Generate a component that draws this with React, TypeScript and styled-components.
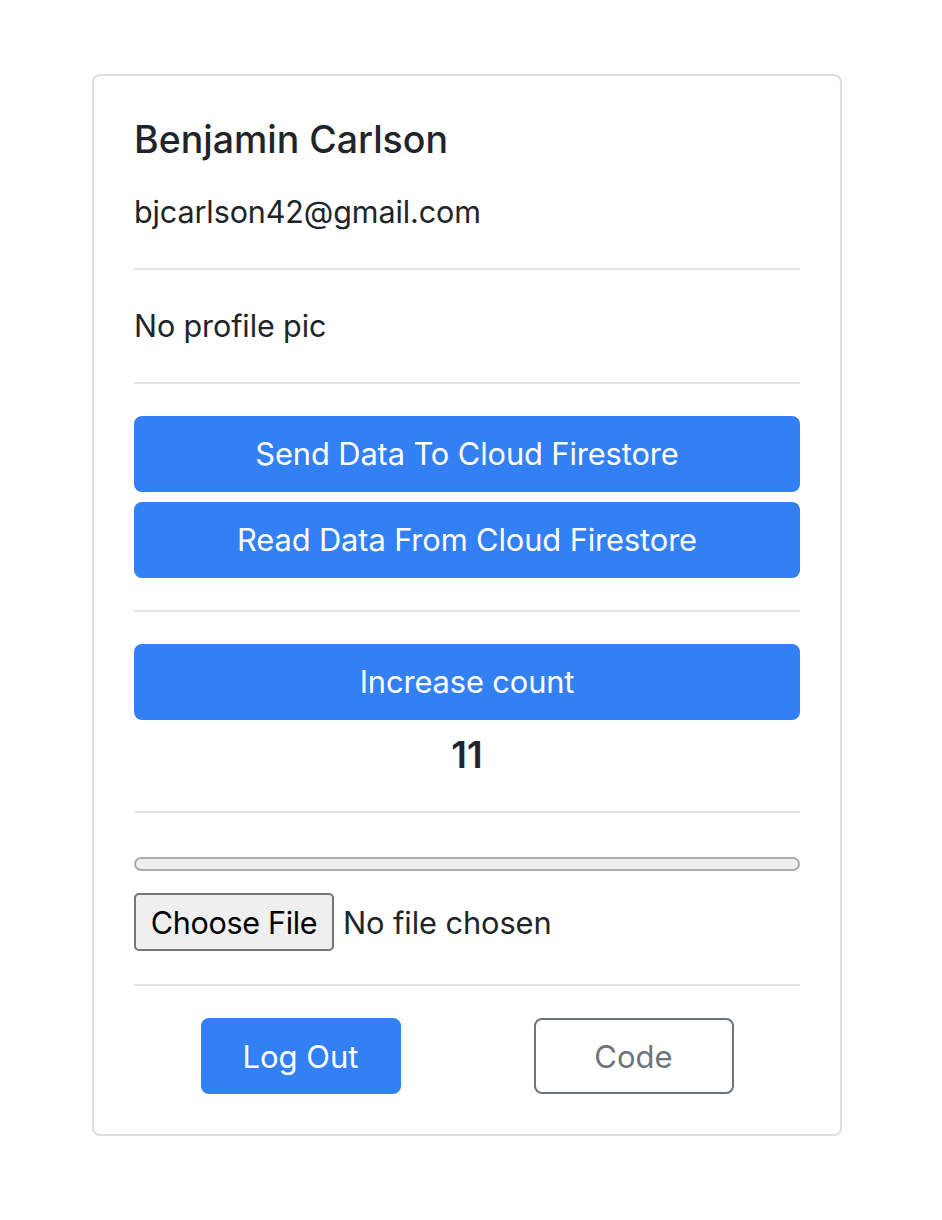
import React from "react";
import styled, { createGlobalStyle } from "styled-components";

const Global = createGlobalStyle`
  html, body { margin: 0; padding: 0; background: #ffffff; }
  body {
    font-family: Inter, "Noto Sans", "Liberation Sans", sans-serif;
    color: #212529;
    -webkit-font-smoothing: antialiased;
  }
  * { box-sizing: border-box; }
`;

const Page = styled.div`
  padding: 74px 0 80px 92px;
`;

const Card = styled.div`
  width: 750px;
  border: 2px solid rgba(0, 0, 0, 0.125);
  border-radius: 8px;
  padding: 40px;
  background: #fff;
`;

const Title = styled.h5`
  margin: 0 0 24px;
  font-size: 37.5px;
  font-weight: 500;
  line-height: 48px;
`;

const Text = styled.p`
  margin: 0 0 32px;
  font-size: 30.5px;
  line-height: 48px;
  letter-spacing: -0.1px;
`;

const Divider = styled.hr`
  border: 0;
  border-top: 2px solid rgba(0, 0, 0, 0.1);
  margin: 32px 0;
  height: 0;
`;

const Button = styled.button<{ $gap?: number }>`
  display: block;
  width: 100%;
  height: 76px;
  margin: 0 0 ${(p) => p.$gap ?? 0}px;
  border: none;
  border-radius: 8px;
  background: #3380f5;
  color: #fff;
  font-family: inherit;
  font-size: 30.8px;
  letter-spacing: -0.1px;
  line-height: 48px;
  padding: 0;
`;

const Count = styled.h5`
  margin: 11px 0 24px;
  text-align: center;
  font-size: 37px;
  font-weight: 600;
  line-height: 48px;
`;

const Upload = styled.div`
  padding-top: 12px;
  margin-bottom: 33px;
`;

const Progress = styled.div`
  height: 14px;
  border: 2px solid #ababab;
  border-radius: 7px;
  background: #efefef;
`;

const FileRow = styled.div`
  display: flex;
  align-items: center;
  gap: 9px;
  margin-top: 22px;
`;

const FileButton = styled.button`
  height: 58px;
  width: 200px;
  padding: 0;
  border: 2px solid #767676;
  border-radius: 5px;
  background: #efefef;
  color: #000;
  font-family: inherit;
  font-size: 30.5px;
  letter-spacing: -0.3px;
`;

const FileLabel = styled.span`
  font-size: 30.8px;
  letter-spacing: -0.1px;
  color: #212529;
`;

const Footer = styled.div`
  display: grid;
  grid-template-columns: 1fr 1fr;
  margin-top: 32px;
`;

const Cell = styled.div`
  display: flex;
  justify-content: center;
`;

const FooterButton = styled.button<{ $outline?: boolean }>`
  width: 200px;
  height: 76px;
  padding: 0;
  border-radius: 8px;
  font-family: inherit;
  font-size: 31px;
  border: 2px solid ${(p) => (p.$outline ? "#6c757d" : "#3380f5")};
  background: ${(p) => (p.$outline ? "#fff" : "#3380f5")};
  color: ${(p) => (p.$outline ? "#6c757d" : "#fff")};
`;

export default function App() {
  return (
    <>
      <Global />
      <Page>
        <Card>
          <Title>Benjamin Carlson</Title>
          <Text>bjcarlson42@gmail.com</Text>
          <Divider />
          <Text>No profile pic</Text>
          <Divider />
          <Button $gap={10}>Send Data To Cloud Firestore</Button>
          <Button>Read Data From Cloud Firestore</Button>
          <Divider />
          <Button>Increase count</Button>
          <Count>11</Count>
          <Divider />
          <Upload>
            <Progress />
            <FileRow>
              <FileButton>Choose File</FileButton>
              <FileLabel>No file chosen</FileLabel>
            </FileRow>
          </Upload>
          <Divider />
          <Footer>
            <Cell>
              <FooterButton>Log Out</FooterButton>
            </Cell>
            <Cell>
              <FooterButton $outline>Code</FooterButton>
            </Cell>
          </Footer>
        </Card>
      </Page>
    </>
  );
}
